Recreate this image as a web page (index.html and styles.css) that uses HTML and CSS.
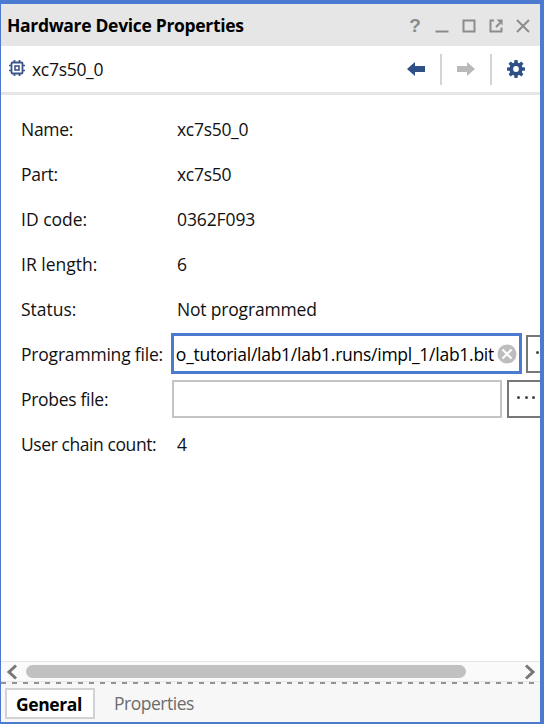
FILE: index.html
```html
<!DOCTYPE html>
<html lang="en">
<head>
<meta charset="utf-8">
<title>Hardware Device Properties</title>
<link rel="stylesheet" href="styles.css">
</head>
<body>
<main class="panel">
  <header class="titlebar">
    <h1 class="title">Hardware Device Properties</h1>
    <div class="window-actions">
      <span class="help">?</span>
      <svg width="14" height="16" viewBox="0 0 14 16"><path d="M0.5 13.5H13.5" stroke="#8c8c8c" stroke-width="2"/></svg>
      <svg width="14" height="16" viewBox="0 0 14 16"><rect x="1.5" y="2.5" width="11" height="11" fill="none" stroke="#8c8c8c" stroke-width="2"/></svg>
      <svg width="14" height="16" viewBox="0 0 14 16" fill="none" stroke="#8c8c8c" stroke-width="2"><path d="M5 2.5H1.5V13.5H12.5V9.5M7 9L11 5"/><path d="M7.5 1.5H13.5V7.5Z" fill="#8c8c8c" stroke="none"/></svg>
      <svg width="14" height="16" viewBox="0 0 14 16"><path d="M1 2L13 14M13 2L1 14" stroke="#8c8c8c" stroke-width="2"/></svg>
    </div>
  </header>
  <div class="toolbar">
    <svg class="chip" width="16" height="16" viewBox="0 0 16 16" fill="none" stroke="#3c5589"><path d="M5.5 0V3M10.5 0V3M5.5 13V16M10.5 13V16M0 5.5H3M0 10.5H3M13 5.5H16M13 10.5H16" stroke-width="1.7"/><rect x="2.5" y="2.5" width="11" height="11" rx="1" stroke-width="1.8"/><rect x="6" y="6" width="4" height="4" stroke-width="1.6"/></svg>
    <span class="device">xc7s50_0</span>
    <svg class="arrow" width="18" height="14" viewBox="0 0 18 14"><path d="M0 7L8 0V4H18V10H8V14Z" fill="#2f4f87"/></svg>
    <i class="divider"></i>
    <svg class="arrow" width="18" height="14" viewBox="0 0 18 14"><path d="M18 7L10 0V4H0V10H10V14Z" fill="#b9b9b9"/></svg>
    <i class="divider"></i>
    <svg class="gear" width="18" height="18" viewBox="-9 -9 18 18"><g fill="#2f4f87"><path id="t" d="M-2 -5L-1.5 -9H1.5L2 -5V5L1.5 9H-1.5L-2 5Z"/><use href="#t" transform="rotate(45)"/><use href="#t" transform="rotate(90)"/><use href="#t" transform="rotate(135)"/><circle r="6.6"/></g><circle r="2.9" fill="#fff"/></svg>
  </div>
  <section class="content">
    <div class="row"><span class="label">Name:</span><span class="value">xc7s50_0</span></div>
    <div class="row"><span class="label">Part:</span><span class="value">xc7s50</span></div>
    <div class="row"><span class="label wide">ID code:</span><span class="value code">0362F093</span></div>
    <div class="row"><span class="label wide">IR length:</span><span class="value">6</span></div>
    <div class="row"><span class="label wide">Status:</span><span class="value status">Not programmed</span></div>
    <div class="row"><span class="label programming">Programming file:</span>
      <div class="field focused"><div class="clip"><span class="path">o_tutorial/lab1/lab1.runs/impl_1/lab1.bit</span></div>
        <svg width="20" height="20" viewBox="0 0 20 20"><circle cx="10" cy="10" r="9.5" fill="#bdbdbd"/><path d="M5.5 5.5L14.5 14.5M14.5 5.5L5.5 14.5" stroke="#fff" stroke-width="2.2"/></svg>
      </div>
      <div class="browse first"><i></i><i></i><i></i></div>
    </div>
    <div class="row"><span class="label">Probes file:</span>
      <div class="field empty"></div>
      <div class="browse second"><i></i><i></i><i></i></div>
    </div>
    <div class="row"><span class="label count">User chain count:</span><span class="value">4</span></div>
  </section>
  <div class="scrollbar">
    <svg width="12" height="16" viewBox="0 0 12 16"><path d="M10 1.5L3 8L10 14.5" fill="none" stroke="#777" stroke-width="3"/></svg>
    <div class="track"><div class="thumb"></div></div>
    <svg width="12" height="16" viewBox="0 0 12 16"><path d="M2 1.5L9 8L2 14.5" fill="none" stroke="#777" stroke-width="3"/></svg>
  </div>
  <div class="dashes"></div>
  <nav class="tabs"><span class="tab active">General</span><span class="tab">Properties</span></nav>
</main>
</body>
</html>
```
FILE: styles.css
```css
* { box-sizing: border-box; }
body { margin: 0; }
svg { display: block; flex: none; }
.panel {
  width: 544px; height: 724px; overflow: hidden;
  display: flex; flex-direction: column;
  border: solid #4a7bd0; border-width: 4px 4px 2px 1px;
  background: #fff; color: #111;
  font: 17.5px/24px "Open Sans", "Noto Sans", sans-serif;
  letter-spacing: -0.3px; white-space: nowrap;
}
.titlebar {
  height: 42px; flex: none; background: #e6e6e6;
  display: flex; align-items: center; justify-content: space-between;
  padding: 0 10px 0 6px;
}
.title { margin: 0; font-size: 17.5px; font-weight: 700; line-height: 24px; letter-spacing: -0.32px; color: #000; }
.window-actions { display: flex; align-items: center; gap: 13px; padding-top: 2px; }
.help { width: 14px; font: 700 19px/18px "Liberation Sans", sans-serif; color: #8c8c8c; text-align: center; letter-spacing: 0; }
.toolbar {
  height: 49px; flex: none; border-bottom: 3px solid #e6e6e6;
  display: flex; align-items: center; padding: 0 15px 0 8px;
}
.chip { margin: 0 7px 3px 0; }
.device { margin-right: auto; }
.divider { width: 2px; height: 31px; background: #d4d4d4; margin: 0 15px; }
.content { flex: none; height: 566px; padding: 11px 0 0 20px; }
.row { display: flex; align-items: center; height: 45px; }
.label { width: 156px; flex: none; }
.wide { letter-spacing: 0; }
.code { letter-spacing: -0.1px; }
.status { letter-spacing: -0.18px; }
.programming { width: 150px; letter-spacing: -0.2px; }
.count { letter-spacing: -0.42px; }
.field { flex: none; background: #fff; display: flex; align-items: center; }
.focused { width: 351px; height: 41px; border: 3px solid #4a7bd0; padding: 0 2px; gap: 3px; }
.clip { flex: 1; min-width: 0; overflow: hidden; display: flex; justify-content: flex-end; }
.path { color: #000; letter-spacing: -0.26px; }
.empty { width: 330px; height: 38px; margin-left: -5px; border: 2px solid #c4c4c4; }
.browse { width: 40px; height: 38px; flex: none; border: 2px solid #777; background: #fff; display: flex; align-items: center; gap: 4.5px; padding: 0 0 2px 8px; }
.first { margin-left: 4px; }
.second { margin-left: 5px; }
.browse i { width: 3px; height: 3px; border-radius: 50%; background: #444; }
.scrollbar { height: 21px; flex: none; background: #fafafa; border: solid #e6e6e6; border-width: 1px 0; display: flex; align-items: center; padding: 0 4px 0 5px; }
.track { flex: 1; padding-left: 8px; }
.thumb { width: 440px; height: 13px; border-radius: 7px; background: #c1c1c1; }
.dashes { height: 2px; flex: none; background: repeating-linear-gradient(90deg, #949494 0 5px, #f7f7f7 5px 11px); }
.tabs { flex: 1; background: #f7f7f7; display: flex; align-items: flex-start; padding: 4px 0 0 4px; }
.tab { height: 31px; line-height: 31px; padding-left: 19px; color: #6c6c6c; letter-spacing: -0.48px; }
.active { width: 90px; border: 2px solid #d2d2d2; background: #fff; padding: 0 2px 0 0; line-height: 28px; text-align: center; font-weight: 700; color: #000; letter-spacing: -0.4px; }
```
